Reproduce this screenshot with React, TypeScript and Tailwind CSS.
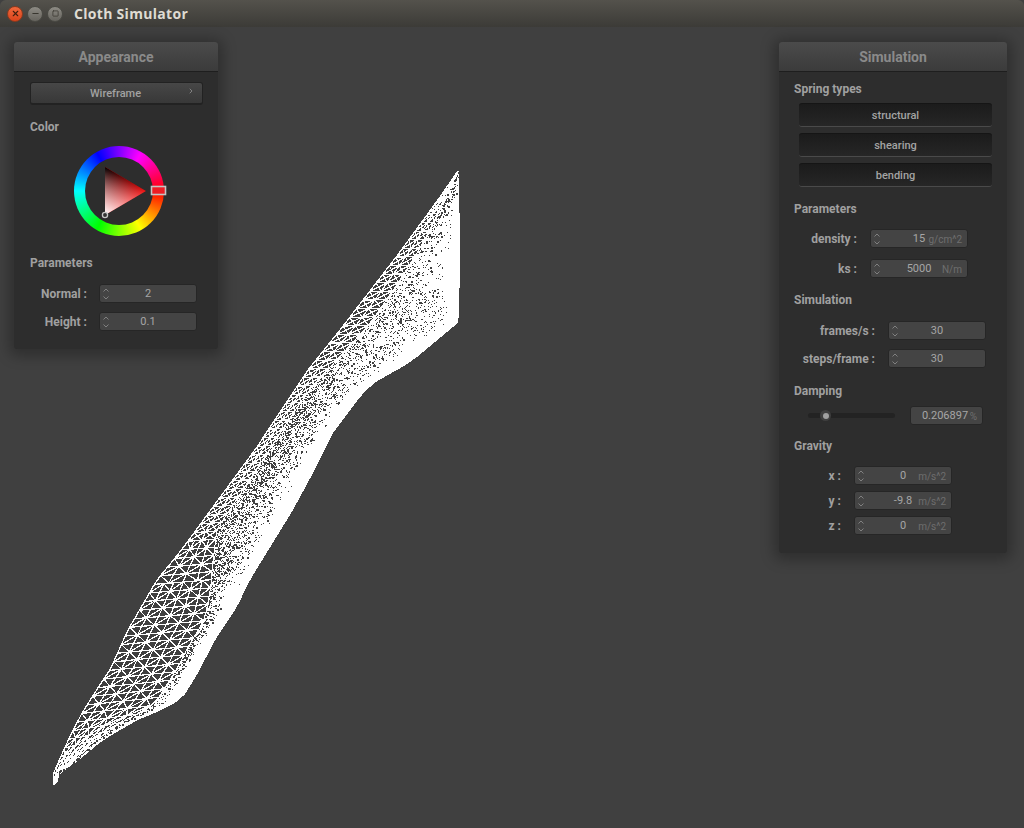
import { useMemo } from 'react'
import { ChevronRight, X, Minus, Square } from 'lucide-react'

type Pt = [number, number]

// cloth outline, bottom tip to top tip
const leftEdge: Pt[] = [
  [54, 785], [52, 777], [65, 747], [82, 713], [103, 680], [110, 670], [128, 630], [157, 580], [180, 552],
  [257, 447], [308, 370], [340, 330], [400, 252], [440, 197], [458, 171],
]
const rightEdge: Pt[] = [
  [57, 785], [62, 767], [73, 765], [103, 740], [143, 717], [168, 708], [183, 697], [197, 675], [215, 640], [237, 607],
  [250, 580], [293, 510], [313, 473], [333, 433], [363, 393], [378, 380], [403, 367], [417, 357],
  [459, 322], [460, 250], [459, 171],
]

const BOTTOM = 785
const TOP = 171

// x on an edge for a given height on the screen
function sampler(points: Pt[]) {
  return (y: number): number => {
    if (y >= points[0][1]) return points[0][0]
    for (let i = 1; i < points.length; i++) {
      if (y >= points[i][1]) {
        const k = (points[i - 1][1] - y) / (points[i - 1][1] - points[i][1])
        return points[i - 1][0] + (points[i][0] - points[i - 1][0]) * k
      }
    }
    return points[points.length - 1][0]
  }
}

function table(stops: Pt[], t: number) {
  for (let i = 1; i < stops.length; i++) {
    if (t <= stops[i][0]) {
      const k = (t - stops[i - 1][0]) / (stops[i][0] - stops[i - 1][0])
      return stops[i - 1][1] + (stops[i][1] - stops[i - 1][1]) * k
    }
  }
  return stops[stops.length - 1][1]
}

// how much of the cloth's width shows open mesh, from bottom to top
const openStops: Pt[] = [[0, 0.72], [0.26, 0.75], [0.33, 0.6], [0.42, 0.24], [0.6, 0.2], [0.75, 0.22], [0.9, 0.32], [1, 0.3]]
// how many dark specks the dense part gets
const speckStops: Pt[] = [[0, 0.12], [0.3, 0.2], [0.4, 0.42], [0.62, 0.42], [0.75, 0.26], [0.85, 0.1], [1, 0.06]]

function buildCloth() {
  const L = sampler(leftEdge)
  const R = sampler(rightEdge)
  const rows = 72
  const tilt = 6
  const at = (t: number, f: number): Pt => {
    const y0 = BOTTOM - t * (BOTTOM - TOP)
    const yl = Math.min(BOTTOM, y0 + tilt * (1 - t))
    const yr = Math.max(TOP, y0 - tilt * (1 - t))
    const y = yl + (yr - yl) * f
    return [L(yl) + (R(yr) - L(yl)) * f, y]
  }
  const p = (q: Pt) => `${q[0].toFixed(1)} ${q[1].toFixed(1)}`
  let mesh = ''
  for (let i = 0; i < rows; i++) {
    const t0 = i / rows
    const t1 = (i + 1) / rows
    const o0 = table(openStops, t0)
    const o1 = table(openStops, t1)
    // wide triangles low on the sheet, a narrow lattice along the edge above
    const cols = t0 < 0.33 ? 6 : t0 < 0.4 ? 4 : 2
    for (let j = 0; j < cols; j++) {
      const a = at(t0, (o0 * j) / cols)
      const b = at(t0, (o0 * (j + 1)) / cols)
      const c = at(t1, (o1 * j) / cols)
      const d = at(t1, (o1 * (j + 1)) / cols)
      mesh += `M${p(a)}L${p(b)}M${p(a)}L${p(c)}`
      if (cols === 2) mesh += `M${p(a)}L${p(d)}M${p(b)}L${p(c)}`
      else mesh += (i + j) % 2 ? `M${p(a)}L${p(d)}` : `M${p(b)}L${p(c)}`
    }
    mesh += `M${p(at(t0, o0))}L${p(at(t1, o1))}`
    mesh += `M${p(at(t0, 0))}L${p(at(t1, 0))}`
  }

  // solid part of the sheet, right of the open mesh
  const solidL: string[] = []
  const solidR: string[] = []
  for (let i = 0; i <= rows; i++) {
    const t = i / rows
    solidL.push(p(at(t, table(openStops, t))))
    solidR.push(p(at(t, 1)))
  }
  const solid = `M${solidL.join('L')}L${solidR.reverse().join('L')}Z`

  // fine holes in the solid part, thinning out toward the far edge
  let seed = 7
  const rand = () => {
    seed = (seed * 16807) % 2147483647
    return seed / 2147483647
  }
  let specks = ''
  for (let n = 0; n < 30000; n++) {
    const t = rand()
    const o = table(openStops, t)
    const u = rand()
    const f = o + (1 - o) * u
    const reach = t < 0.32 ? 0.45 : 0.78
    const keep = table(speckStops, t) * Math.max(0, 1 - u / reach)
    if (rand() > keep * 1.5) continue
    const q = at(t, f)
    const blob = rand()
    const w = blob > 0.86 ? 2 : 1
    const h = blob > 0.94 ? 2 : 1
    specks += `M${Math.round(q[0])} ${Math.round(q[1])}h${w}v${h}h${-w}z`
  }
  // the bulge near the top, where the sheet folds over
  for (let n = 0; n < 170; n++) {
    const a = rand() * Math.PI * 2
    const r = Math.sqrt(rand())
    const x = Math.round(420 + Math.cos(a) * r * 26 - Math.sin(a) * r * 8)
    const y = Math.round(312 + Math.sin(a) * r * 24 + Math.cos(a) * r * 6)
    specks += `M${x} ${y}h${rand() > 0.6 ? 2 : 1}v1h-1z`
  }
  return { mesh, solid, specks }
}

function ClothWireframe() {
  const cloth = useMemo(buildCloth, [])
  return (
    <svg className="absolute top-0 left-0" width={1024} height={801} viewBox="0 0 1024 801" shapeRendering="crispEdges">
      <path d={cloth.solid} fill="#ffffff" />
      <path d={cloth.mesh} stroke="#ffffff" strokeWidth={1.25} fill="none" />
      <path d={cloth.specks} fill="#404040" />
    </svg>
  )
}

function PanelHeader({ title }: { title: string }) {
  return (
    <div className="flex h-[30px] items-center justify-center rounded-t-[3px] border-b border-[#1e1e1e] bg-gradient-to-b from-[#4b4b4b] to-[#3b3b3b] pt-px text-[14px] font-bold text-[#8a8a8a]">
      {title}
    </div>
  )
}

function GroupLabel({ children, className }: { children: string; className: string }) {
  return <div className={`text-[12px] leading-[14px] font-bold text-[#a0a0a0] ${className}`}>{children}</div>
}

function SpinnerIcon() {
  return (
    <svg className="absolute top-[3px] left-[3px]" width={6} height={12} viewBox="0 0 6 12" fill="none" stroke="#808080" strokeWidth={1}>
      <polyline points="0.5,3.5 3,1 5.5,3.5" />
      <polyline points="0.5,8.5 3,11 5.5,8.5" />
    </svg>
  )
}

function NumberBox({ value, unit, spinner = true, className }: { value: string; unit?: string; spinner?: boolean; className: string }) {
  return (
    <div className={`relative flex h-[19px] items-center justify-center rounded-[3px] border border-[#262626] bg-[#444444] pt-px text-[11px] text-[#a6a6a6] ${className}`}>
      {spinner && <SpinnerIcon />}
      <span>{value}</span>
      {unit && <span className="absolute right-[5px] text-[10px] text-[#6e6e6e]">{unit}</span>}
    </div>
  )
}

function Row({ label, labelWidth, children, className }: { label: string; labelWidth: string; children: React.ReactNode; className: string }) {
  return (
    <div className={`flex items-center ${className}`}>
      <div className={`text-right text-[12px] font-bold text-[#a0a0a0] ${labelWidth}`}>{label}</div>
      {children}
    </div>
  )
}

function SpringButton({ label, className }: { label: string; className: string }) {
  return (
    <div className={`ml-[20px] flex h-[24px] w-[193px] items-center justify-center rounded-[3px] border-t border-b border-t-[#151515] border-b-[#4a4a4a] bg-gradient-to-b from-[#1b1b1b] to-[#262626] pt-[2px] text-[11px] font-medium text-[#a4a4a4] ${className}`}>
      {label}
    </div>
  )
}

function ColorWheel() {
  return (
    <div className="relative mt-[12px] ml-[60px] h-[90px] w-[90px]">
      <div className="h-full w-full rounded-full bg-[conic-gradient(from_90deg,#ff0000,#ffff00,#00ff00,#00ffff,#0000ff,#ff00ff,#ff0000)]" />
      <div className="absolute top-[11px] left-[11px] h-[68px] w-[68px] rounded-full bg-[#2d2d2d]" />
      <svg className="absolute top-[-6px] left-0" width={104} height={104} viewBox="0 0 104 104">
        <defs>
          <linearGradient id="tri-black" gradientUnits="userSpaceOnUse" x1="31" y1="27" x2="52" y2="63">
            <stop offset="0" stopColor="#000000" />
            <stop offset="1" stopColor="#000000" stopOpacity="0" />
          </linearGradient>
          <linearGradient id="tri-white" gradientUnits="userSpaceOnUse" x1="31" y1="75" x2="52" y2="39">
            <stop offset="0" stopColor="#ffffff" />
            <stop offset="1" stopColor="#ffffff" stopOpacity="0" />
          </linearGradient>
        </defs>
        <polygon points="31,27 72,51 31,75" fill="#f01010" />
        <polygon points="31,27 72,51 31,75" fill="url(#tri-black)" />
        <polygon points="31,27 72,51 31,75" fill="url(#tri-white)" />
        <circle cx="31" cy="75" r="2.6" fill="#333333" stroke="#c8c8c8" strokeWidth="1.3" />
        <rect x="77.5" y="46.5" width="14" height="8" fill="#ee1c24" stroke="#c4c4c4" strokeWidth="1.6" />
      </svg>
    </div>
  )
}

function AppearancePanel() {
  return (
    <div className="absolute top-[42px] left-[14px] h-[307px] w-[204px] rounded-[3px] bg-[#2d2d2d] shadow-[0_2px_14px_5px_rgba(0,0,0,0.28)]">
      <PanelHeader title="Appearance" />
      <div className="relative mx-[16px] mt-[10px] flex h-[23px] w-[173px] items-center justify-center rounded-[3px] border border-b-2 border-[#222222] bg-gradient-to-b from-[#474747] to-[#383838] pt-[2px] text-[11px] font-medium text-[#a2a2a2]">
        <span className="pr-[2px]">Wireframe</span>
        <ChevronRight className="absolute top-[4px] left-[156px]" size={8} strokeWidth={2} />
      </div>
      <GroupLabel className="mt-[15px] ml-[16px]">Color</GroupLabel>
      <ColorWheel />
      <GroupLabel className="mt-[20px] ml-[16px]">Parameters</GroupLabel>
      <Row className="mt-[14px]" label="Normal :" labelWidth="w-[73px]">
        <NumberBox className="ml-[12px] w-[98px]" value="2" />
      </Row>
      <Row className="mt-[9px]" label="Height :" labelWidth="w-[73px]">
        <NumberBox className="ml-[12px] w-[98px]" value="0.1" />
      </Row>
    </div>
  )
}

function SimulationPanel() {
  return (
    <div className="absolute top-[42px] left-[779px] h-[511px] w-[228px] rounded-[3px] bg-[#2d2d2d] shadow-[0_2px_14px_5px_rgba(0,0,0,0.28)]">
      <PanelHeader title="Simulation" />
      <GroupLabel className="mt-[10px] ml-[15px]">Spring types</GroupLabel>
      <SpringButton className="mt-[7px]" label="structural" />
      <SpringButton className="mt-[6px]" label="shearing" />
      <SpringButton className="mt-[6px]" label="bending" />
      <GroupLabel className="mt-[15px] ml-[15px]">Parameters</GroupLabel>
      <Row className="mt-[13px]" label="density :" labelWidth="w-[78px]">
        <NumberBox className="ml-[13px] w-[98px]" value="15" unit="g/cm^2" />
      </Row>
      <Row className="mt-[11px]" label="ks :" labelWidth="w-[78px]">
        <NumberBox className="ml-[13px] w-[98px]" value="5000" unit="N/m" />
      </Row>
      <GroupLabel className="mt-[15px] ml-[15px]">Simulation</GroupLabel>
      <Row className="mt-[14px]" label="frames/s :" labelWidth="w-[96px]">
        <NumberBox className="ml-[13px] w-[98px]" value="30" />
      </Row>
      <Row className="mt-[9px]" label="steps/frame :" labelWidth="w-[96px]">
        <NumberBox className="ml-[13px] w-[98px]" value="30" />
      </Row>
      <GroupLabel className="mt-[16px] ml-[15px]">Damping</GroupLabel>
      <div className="mt-[8px] ml-[29px] flex items-center">
        <div className="relative h-[5px] w-[87px] rounded-full bg-[#232323]">
          <div className="absolute top-[-3px] left-[12px] flex h-[11px] w-[11px] items-center justify-center rounded-full bg-[#3f3f3f]">
            <div className="h-[6px] w-[6px] rounded-full bg-[#a0a0a0]" />
          </div>
        </div>
        <NumberBox className="ml-[15px] w-[73px] pr-[3px]" value="0.206897" unit="%" spinner={false} />
      </div>
      <GroupLabel className="mt-[14px] ml-[15px]">Gravity</GroupLabel>
      <Row className="mt-[13px]" label="x :" labelWidth="w-[62px]">
        <NumberBox className="ml-[13px] w-[98px]" value="0" unit="m/s^2" />
      </Row>
      <Row className="mt-[6px]" label="y :" labelWidth="w-[62px]">
        <NumberBox className="ml-[13px] w-[98px]" value="-9.8" unit="m/s^2" />
      </Row>
      <Row className="mt-[6px]" label="z :" labelWidth="w-[62px]">
        <NumberBox className="ml-[13px] w-[98px]" value="0" unit="m/s^2" />
      </Row>
    </div>
  )
}

export default function App() {
  return (
    <div className="flex h-[828px] w-[1024px] flex-col overflow-hidden bg-[#404040] font-['Roboto',sans-serif]">
      {/* Window title bar */}
      <div className="flex h-[27px] shrink-0 items-center rounded-t-[6px] bg-gradient-to-b from-[#54524c] to-[#3c3b37] pl-[7px]">
        <div className="flex h-[16px] w-[16px] items-center justify-center rounded-full border border-[#8c3a1e] bg-gradient-to-b from-[#f0683c] to-[#d9431a] text-[#40200f]">
          <X size={9} strokeWidth={3} />
        </div>
        <div className="ml-[4px] flex h-[16px] w-[16px] items-center justify-center rounded-full border border-[#4a4a44] bg-gradient-to-b from-[#8d8b84] to-[#66645e] text-[#38362f]">
          <Minus size={9} strokeWidth={3} />
        </div>
        <div className="ml-[4px] flex h-[16px] w-[16px] items-center justify-center rounded-full border border-[#4a4a44] bg-gradient-to-b from-[#8d8b84] to-[#66645e] text-[#38362f]">
          <Square size={7} strokeWidth={2.5} />
        </div>
        <div className="ml-[11px] font-['Open_Sans',sans-serif] text-[14px] font-bold tracking-[0.3px] text-[#dfdbd2]">Cloth Simulator</div>
      </div>

      {/* GL canvas with floating panels */}
      <div className="relative flex-1">
        <div className="absolute top-[-27px] left-0">
          <ClothWireframe />
        </div>
        <div className="absolute top-[-27px] left-0">
          <AppearancePanel />
          <SimulationPanel />
        </div>
      </div>
    </div>
  )
}
